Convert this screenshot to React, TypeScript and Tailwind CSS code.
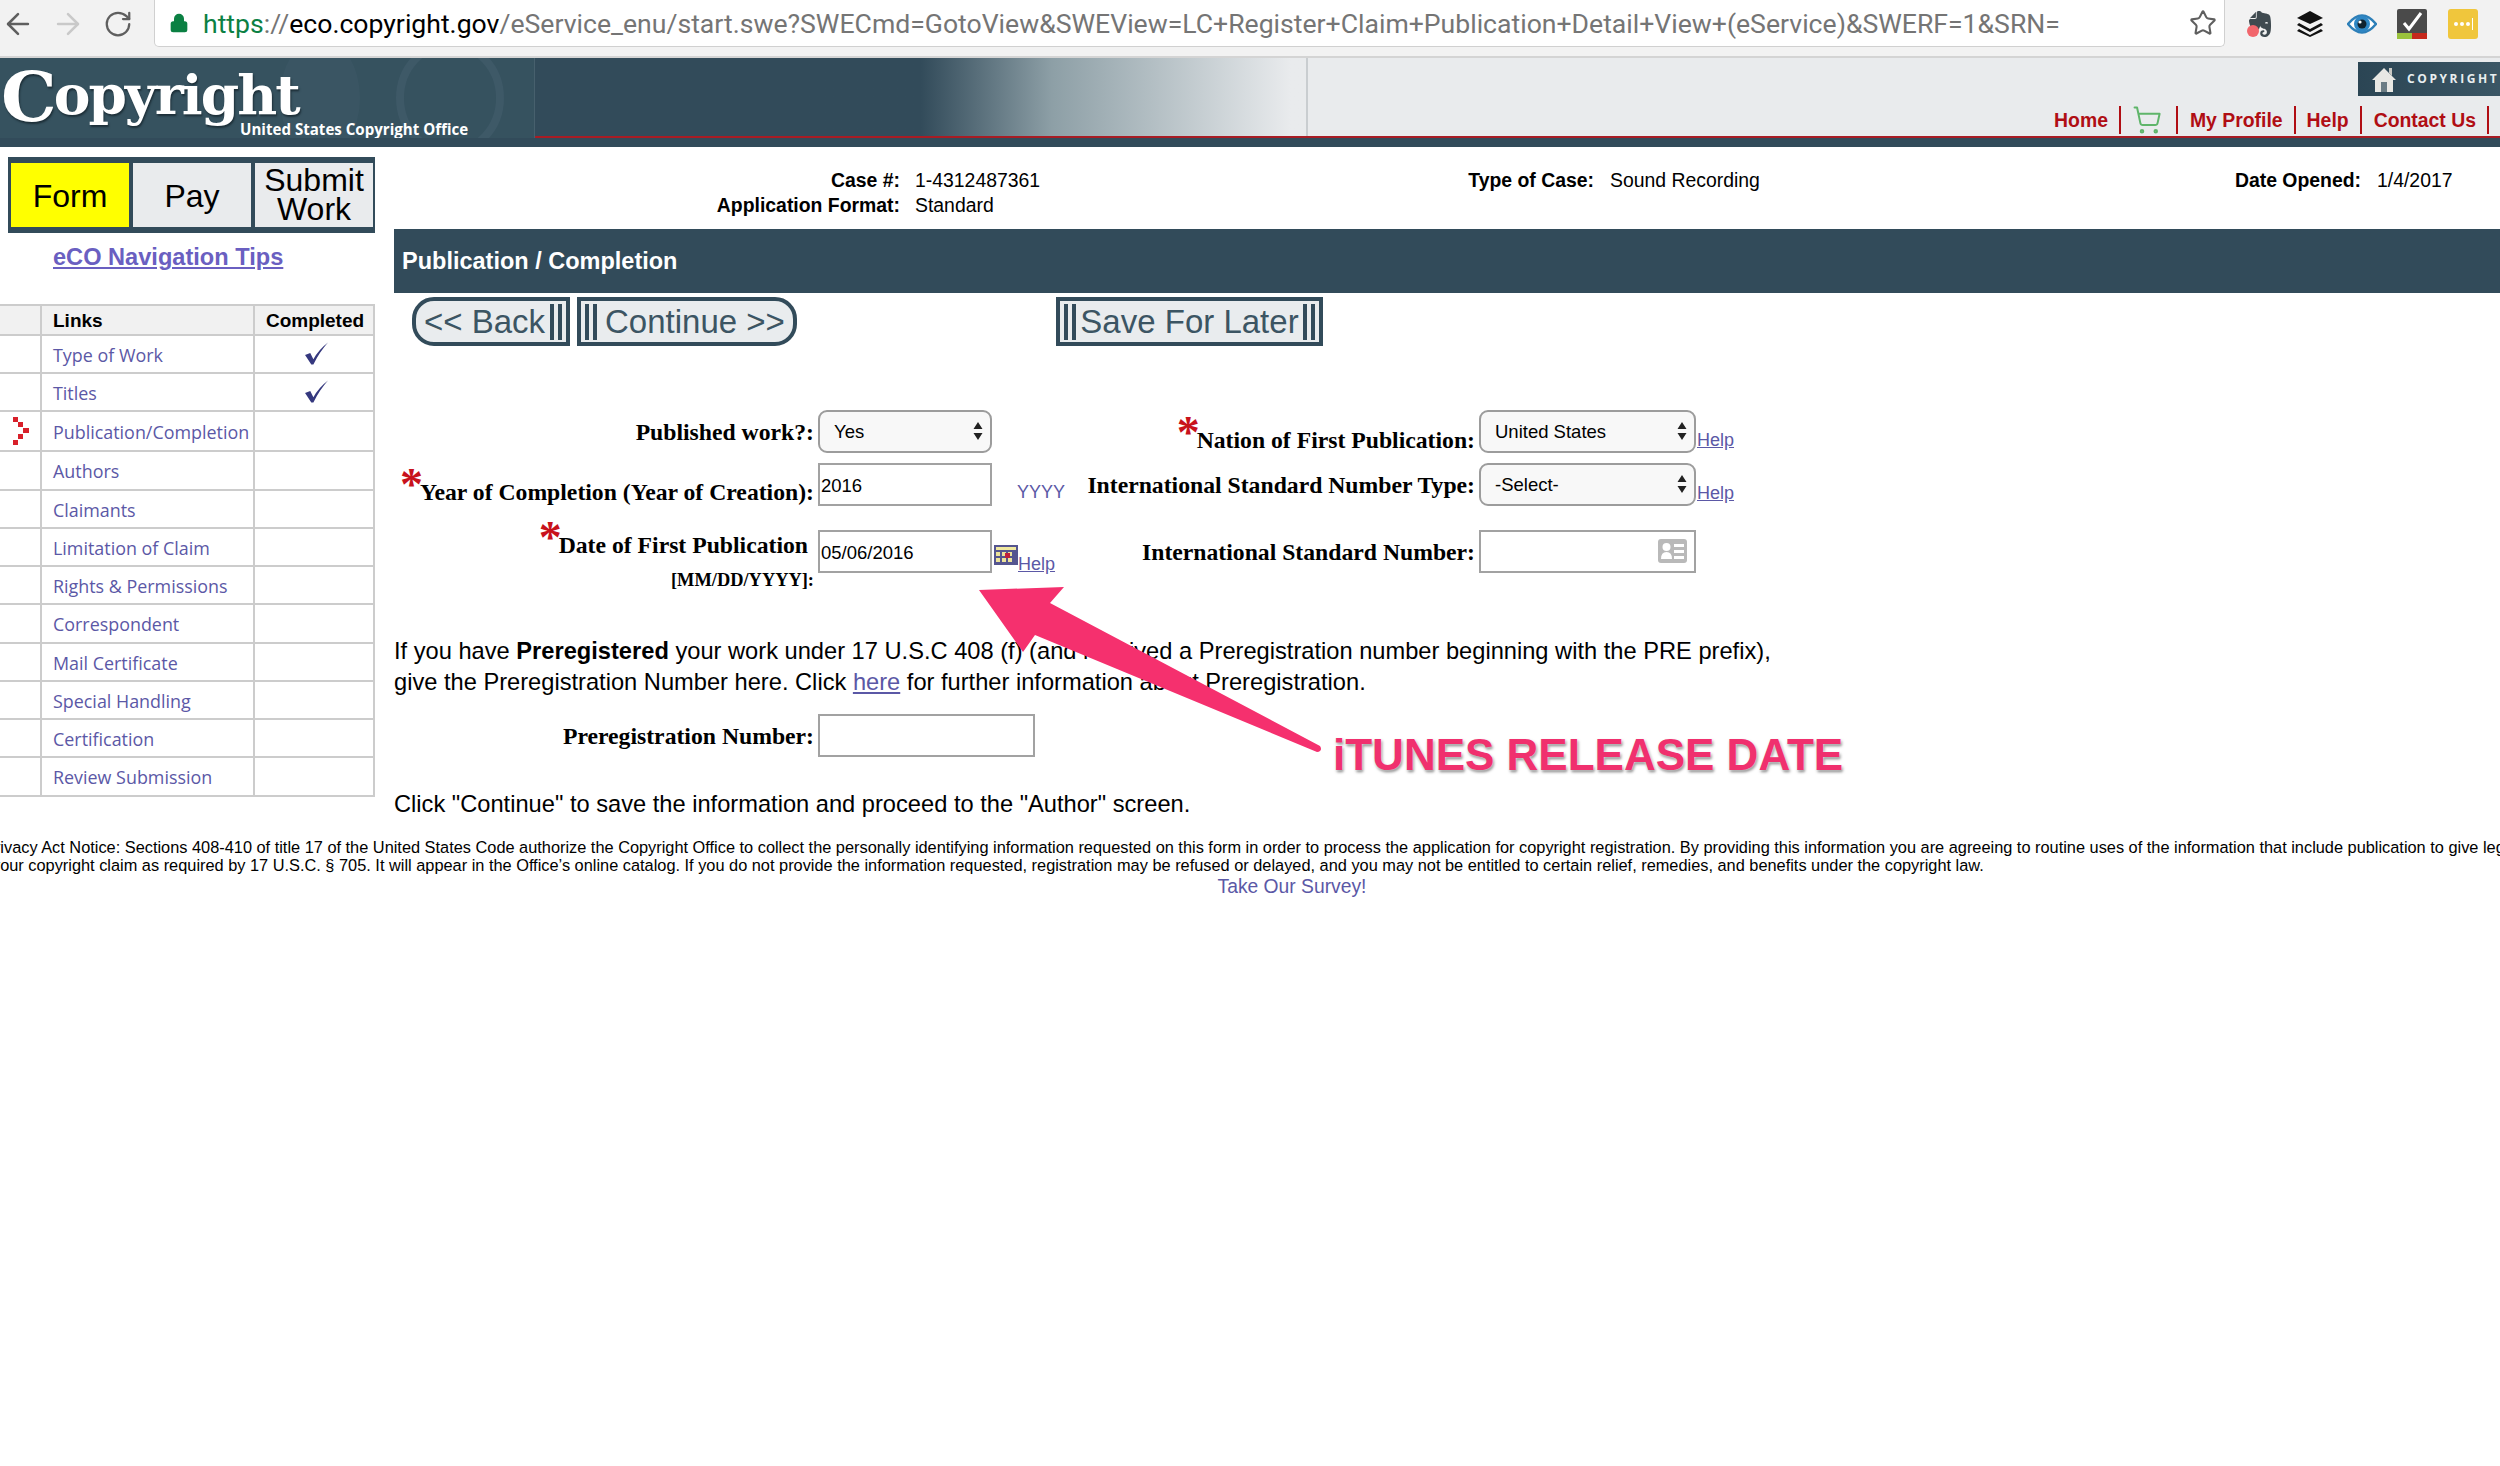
import React from "react";
import { ArrowLeft, ArrowRight, RotateCw, Star, Lock, ShoppingCart } from "lucide-react";
import { SiEvernote } from "react-icons/si";

const rows: { t: string; h: string; done?: boolean; cur?: boolean }[] = [
  { t: "Type of Work", h: "h-[38px]", done: true },
  { t: "Titles", h: "h-[38px]", done: true },
  { t: "Publication/Completion", h: "h-[40px]", cur: true },
  { t: "Authors", h: "h-[39px]" },
  { t: "Claimants", h: "h-[38px]" },
  { t: "Limitation of Claim", h: "h-[38px]" },
  { t: "Rights & Permissions", h: "h-[38px]" },
  { t: "Correspondent", h: "h-[39px]" },
  { t: "Mail Certificate", h: "h-[38px]" },
  { t: "Special Handling", h: "h-[38px]" },
  { t: "Certification", h: "h-[38px]" },
  { t: "Review Submission", h: "h-[39px]" },
];

function Bars() {
  return <span className="inline-block shrink-0 w-[12px] h-[36px] border-x-[4px] border-[#324b5a]" />;
}

function Asterisk() {
  return (
    <span className="block w-[20px] h-[28px] -mt-[16px] text-[46px] leading-[46px] text-[#c8121c] font-bold text-center">
      *
    </span>
  );
}

function Select({ value, w }: { value: string; w: string }) {
  return (
    <div className={`${w} h-[43px] shrink-0 rounded-[9px] border-2 border-[#9c9c9c] bg-[#f8f8f8] flex items-center justify-between pl-[14px] pr-[7px] font-['Liberation_Sans',sans-serif] font-normal text-[18.5px] text-black`}>
      <span>{value}</span>
      <svg width="10" height="18" viewBox="0 0 10 18" className="mb-[2px]">
        <path d="M5 0 L9.5 7 H0.5 Z M5 18 L9.5 11 H0.5 Z" fill="#222" />
      </svg>
    </div>
  );
}

function Field({ value, w, children }: { value: string; w: string; children?: React.ReactNode }) {
  return (
    <div className={`${w} h-[43px] shrink-0 border-2 border-[#a2a2a2] bg-white flex items-center justify-between pl-[1px] pr-[7px] pt-[2px] font-['Liberation_Sans',sans-serif] font-normal text-[18.5px] text-black`}>
      <span>{value}</span>
      {children}
    </div>
  );
}

function HelpLink({ cls }: { cls: string }) {
  return <a className={`underline text-[18px] leading-[22px] text-[#5b58a6] font-['Liberation_Sans',sans-serif] ${cls}`}>Help</a>;
}

const navSep = "w-[2px] h-[28px] bg-[#b00e14]";

export default function App() {
  return (
    <div className="relative w-[2500px] h-[1466px] overflow-hidden bg-white font-['Liberation_Sans',sans-serif] text-black">
      {/* browser toolbar */}
      <div className="h-[58px] bg-[#f2f2f2] border-b-2 border-[#d4d4d4] flex items-start">
        <div className="w-[154px] h-[48px] flex items-center shrink-0">
          <ArrowLeft className="ml-[1px] w-[34px] h-[34px] text-[#5f5f5f]" strokeWidth={1.8} />
          <ArrowRight className="ml-[16px] w-[34px] h-[34px] text-[#c9c9c9]" strokeWidth={1.8} />
          <RotateCw className="ml-[18px] w-[30px] h-[30px] text-[#5f5f5f]" strokeWidth={1.8} />
        </div>
        <div className="w-[2071px] h-[47px] bg-white border border-t-0 border-[#d0d0d0] rounded-b-[5px] flex items-center shrink-0">
          <Lock className="ml-[14px] w-[20px] h-[22px] text-[#0b8043] fill-[#0b8043]" strokeWidth={2} />
          <div className="ml-[14px] text-[26.6px] leading-[47px] whitespace-nowrap text-[#757575] font-['Roboto',sans-serif] flex-1">
            <span className="text-[#0b8043]">https</span>://<span className="text-black">eco.copyright.gov</span>/eService_enu/start.swe?SWECmd=GotoView&SWEView=LC+Register+Claim+Publication+Detail+View+(eService)&SWERF=1&SRN=
          </div>
          <Star className="mr-[7px] w-[28px] h-[28px] text-[#5f5f5f] shrink-0" strokeWidth={1.8} />
        </div>
        <div className="flex items-start">
          <span className="relative ml-[22px] mt-[11px] w-[26px] h-[26px]">
            <SiEvernote className="w-[26px] h-[26px] text-[#3f4a50]" />
            <span className="absolute left-0 bottom-0 w-[12px] h-[12px] rounded-full bg-[#f2666c]" />
          </span>
          <svg width="28" height="26" viewBox="0 0 28 26" className="ml-[23px] mt-[11px]">
            <path d="M14 0 L27 7 L14 13 L1 7 Z" fill="#111" />
            <path d="M3 12 L14 18 L25 12 L27 14 L14 21 L1 14 Z" fill="#111" />
            <path d="M3 18 L14 24 L25 18 L27 20 L14 26 L1 20 Z" fill="#111" />
          </svg>
          <svg width="30" height="22" viewBox="0 0 30 22" className="ml-[23px] mt-[13px]">
            <path d="M1 11 Q15 -6 29 11 Q15 28 1 11 Z" fill="#fff" stroke="#2d7fb8" strokeWidth="2.5" />
            <circle cx="15" cy="11" r="8" fill="#2d86c4" />
            <circle cx="15" cy="11" r="4.5" fill="#10222e" />
            <circle cx="13" cy="9" r="1.6" fill="#fff" />
          </svg>
          <svg width="30" height="30" viewBox="0 0 30 30" className="ml-[20px] mt-[9px]">
            <rect width="30" height="30" rx="2" fill="#4a4a4a" />
            <rect x="0" y="24" width="15" height="6" fill="#9ac23c" />
            <rect x="15" y="24" width="15" height="6" fill="#c5281c" />
            <path d="M7 14 L12 20 L24 4" fill="none" stroke="#fff" strokeWidth="3" />
          </svg>
          <div className="ml-[21px] mt-[9px] w-[30px] h-[30px] rounded-[3px] bg-[#f0c63c] flex items-center justify-center gap-[2px]">
            <span className="w-[4px] h-[4px] rounded-full bg-white" />
            <span className="w-[4px] h-[4px] rounded-full bg-white" />
            <span className="w-[4px] h-[4px] rounded-full bg-white" />
            <span className="w-[1px] h-[12px] bg-white" />
          </div>
        </div>
      </div>

      {/* site header */}
      <div className="h-[89px] flex flex-col">
        <div className="h-[80px] flex">
          <div className="relative w-[535px] shrink-0 bg-[#36525f] border-r border-[#47606d] overflow-hidden">
            <svg width="535" height="80" viewBox="0 0 535 80" className="absolute left-0 top-0">
              <ellipse cx="450" cy="40" rx="50" ry="54" fill="none" stroke="#46606f" strokeWidth="8" opacity="0.5" />
              <ellipse cx="320" cy="40" rx="40" ry="60" fill="#3c5765" opacity="0.7" />
            </svg>
            <div className="relative flex items-start h-[80px] font-['DejaVu_Serif',serif] font-bold text-white [text-shadow:1px_2px_2px_#1d2f38]">
              <span className="text-[70px] leading-[80px] -mt-[1px] ml-[1px]">C</span>
              <span className="text-[55px] leading-[70px] -ml-[3px] mt-[2px] tracking-[-2px]">opyright</span>
            </div>
            <span className="absolute left-[240px] top-[62px] whitespace-nowrap text-[15.1px] leading-[18px] font-bold text-white font-['Open_Sans',sans-serif]">United States Copyright Office</span>
          </div>
          <div className="w-[771px] shrink-0 bg-gradient-to-r from-[#324b5a] from-[50%] via-[#8d9fa6] via-[67%] to-[#e9ebed] to-[98%]" />
          <div className="flex-1 bg-[#e9ebed] border-l-2 border-[#c9cdd0] flex flex-col items-end">
            <div className="mt-[4px] w-[142px] h-[34px] bg-gradient-to-r from-[#2b4554] to-[#3b5665] flex items-center overflow-hidden">
              <svg width="26" height="28" viewBox="0 0 26 28" className="ml-[13px] shrink-0">
                <path d="M13 3 L25 15 H22 V27 H4 V15 H1 Z" fill="#e8e8e4" />
                <path d="M18 3 h3 v8 l-3 -3 Z" fill="#c9c9c4" />
                <rect x="10" y="17" width="6" height="10" fill="#6b7c84" />
              </svg>
              <span className="ml-[10px] text-[12px] font-bold tracking-[2.6px] text-[#e8eef0] font-['Open_Sans',sans-serif]">COPYRIGHT</span>
            </div>
            <div className="mt-[10px] flex items-center h-[28px] pr-[11px] text-[19.4px] font-bold text-[#b00e14] whitespace-nowrap">
              <span className="pt-[2px]">Home</span>
              <span className={`${navSep} ml-[11px]`} />
              <ShoppingCart className="ml-[11px] w-[30px] h-[30px] text-[#5fb56a]" strokeWidth={1.6} />
              <span className={`${navSep} ml-[14px]`} />
              <span className="ml-[12px] pt-[2px]">My Profile</span>
              <span className={`${navSep} ml-[11px]`} />
              <span className="ml-[11px] pt-[2px]">Help</span>
              <span className={`${navSep} ml-[11px]`} />
              <span className="ml-[12px] pt-[2px]">Contact Us</span>
              <span className={`${navSep} ml-[11px]`} />
            </div>
          </div>
        </div>
        <div className="h-[2px] bg-[#a81c24] -mt-[2px]" />
        <div className="h-[9px] bg-[#324b5a]" />
      </div>

      {/* body */}
      <div className="flex h-[691px]">
        <aside className="w-[394px] shrink-0">
          <div className="ml-[8px] mt-[10px] w-[367px] h-[76px] bg-[#324b5a] flex gap-[4px] pl-[3px] pt-[6px] text-[32px] leading-[29px] text-black">
            <div className="w-[118px] h-[64px] pt-[3px] bg-[#ffff00] flex items-center justify-center">Form</div>
            <div className="w-[118px] h-[64px] pt-[2px] bg-[#e9ebed] flex items-center justify-center">Pay</div>
            <div className="w-[118px] h-[64px] bg-[#e9ebed] flex items-center justify-center text-center">Submit<br />Work</div>
          </div>
          <a className="block ml-[53px] mt-[8px] text-[23.6px] leading-[32px] font-bold underline text-[#6a5fc1]">eCO Navigation Tips</a>
          <div className="mt-[31px] w-[375px] border-t-2 border-r-2 border-[#cccccc] font-['Open_Sans',sans-serif]">
            <div className="h-[30px] grid grid-cols-[42px_213px_1fr] bg-[#f1f1f1] border-b-2 border-[#cccccc] text-[19px] font-bold leading-[30px] font-['Liberation_Sans',sans-serif]">
              <div className="border-r-2 border-[#cccccc]" />
              <div className="border-r-2 border-[#cccccc] pl-[11px]">Links</div>
              <div className="text-center pl-[2px]">Completed</div>
            </div>
            {rows.map((r) => (
              <div key={r.t} className={`${r.h} grid grid-cols-[42px_213px_1fr] border-b-2 border-[#cccccc]`}>
                <div className="border-r-2 border-[#cccccc] flex items-center justify-center">
                  {r.cur && (
                    <svg width="18" height="28" viewBox="0 0 18 28" className="ml-[1px]">
                      <path d="M1 0h5v5H1z M6 5h5v5H6z M11 11h6v5h-6z M6 17h5v5H6z M1 23h5v5H1z" fill="#d8202a" />
                    </svg>
                  )}
                </div>
                <div className="border-r-2 border-[#cccccc] pl-[11px] pt-[2px] flex items-center text-[17.9px] text-[#5b58a6] whitespace-nowrap">{r.t}</div>
                <div className="flex items-center justify-center pl-[4px]">
                  {r.done && (
                    <svg width="25" height="24" viewBox="0 0 24 22">
                      <path d="M1 12 L6 10 L9 16 Q14 7 23 0 Q15 9 9 21 L7 21 Z" fill="#35387e" />
                    </svg>
                  )}
                </div>
              </div>
            ))}
          </div>
        </aside>

        <main className="flex-1 min-w-0">
          {/* case info */}
          <div className="h-[82px] pt-[21px] grid grid-cols-[506px_200px_494px_251px_516px] grid-rows-[25px_25px] text-[19.4px] leading-[25px] whitespace-nowrap">
            <div className="text-right font-bold">Case #:</div>
            <div className="pl-[15px]">1-4312487361</div>
            <div className="text-right font-bold">Type of Case:</div>
            <div className="pl-[16px]">Sound Recording</div>
            <div className="flex">
              <span className="w-[516px] shrink-0 text-right font-bold">Date Opened:</span>
              <span className="ml-[16px] shrink-0">1/4/2017</span>
            </div>
            <div className="text-right font-bold">Application Format:</div>
            <div className="pl-[15px]">Standard</div>
          </div>
          <div className="h-[64px] bg-[#324b5a] flex items-center pl-[8px] pt-[2px] text-[23.5px] font-bold text-white">Publication / Completion</div>

          {/* buttons */}
          <div className="mt-[4px] h-[49px] flex text-[33px] text-[#3c5563]">
            <div className="ml-[18px] w-[158px] h-[49px] rounded-l-[22px] border-[4px] border-[#324b5a] bg-[#e9ecee] flex items-center justify-end pr-[4px] gap-[5px]">
              <span className="whitespace-nowrap">&lt;&lt; Back</span>
              <Bars />
            </div>
            <div className="ml-[7px] w-[220px] h-[49px] rounded-r-[22px] border-[4px] border-[#324b5a] bg-[#e9ecee] flex items-center pl-[4px] gap-[8px]">
              <Bars />
              <span className="whitespace-nowrap">Continue &gt;&gt;</span>
            </div>
            <div className="ml-[259px] w-[267px] h-[49px] border-[4px] border-[#324b5a] bg-[#e9ecee] flex items-center justify-between px-[4px]">
              <Bars />
              <span className="whitespace-nowrap">Save For Later</span>
              <Bars />
            </div>
          </div>

          {/* form */}
          <div className="mt-[64px] font-['Liberation_Serif',serif] text-[23.7px] leading-[28px] font-bold whitespace-nowrap">
            <div className="flex h-[43px]">
              <div className="w-[420px] pt-[8px] text-right">Published work?:</div>
              <div className="w-[4px]" />
              <Select value="Yes" w="w-[174px]" />
              <div className="w-[83px]" />
              <div className="w-[400px] pt-[16px] flex justify-end items-start">
                <Asterisk />
                <span>Nation of First Publication:</span>
              </div>
              <div className="w-[4px]" />
              <Select value="United States" w="w-[217px]" />
              <HelpLink cls="ml-[1px] mt-[19px] font-normal" />
            </div>
            <div className="flex h-[43px] mt-[10px]">
              <div className="w-[420px] pt-[15px] flex justify-end items-start">
                <Asterisk />
                <span>Year of Completion (Year of Creation):</span>
              </div>
              <div className="w-[4px]" />
              <Field value="2016" w="w-[174px]" />
              <div className="w-[83px] pl-[25px] pt-[18px] font-['Liberation_Sans',sans-serif] font-normal text-[18px] leading-[22px] text-[#5b58a6]">YYYY</div>
              <div className="w-[400px] pt-[8px] text-right">International Standard Number Type:</div>
              <div className="w-[4px]" />
              <Select value="-Select-" w="w-[217px]" />
              <HelpLink cls="ml-[1px] mt-[19px] font-normal" />
            </div>
            <div className="flex h-[43px] mt-[24px]">
              <div className="w-[420px] pt-[1px] flex flex-col items-end">
                <div className="flex items-start pr-[6px]">
                  <Asterisk />
                  <span>Date of First Publication</span>
                </div>
                <span className="text-[18.4px] leading-[22px] mt-[10px]">[MM/DD/YYYY]:</span>
              </div>
              <div className="w-[4px]" />
              <Field value="05/06/2016" w="w-[174px]" />
              <div className="w-[83px] flex items-start">
                <svg width="24" height="20" viewBox="0 0 24 20" className="ml-[2px] mt-[15px] shrink-0">
                  <rect width="24" height="20" fill="#55558f" />
                  <rect x="2" y="2" width="20" height="3" fill="#f0e8a0" />
                  <path d="M2 7h4v4H2z M8 7h4v4H8z M14 7h4v4h-4z M2 13h4v4H2z M8 13h4v4H8z M14 13h4v4h-4z" fill="#ece29a" />
                  <rect x="11" y="8" width="5" height="5" fill="#c0203a" />
                </svg>
                <HelpLink cls="mt-[23px] font-normal" />
              </div>
              <div className="w-[400px] pt-[8px] text-right">International Standard Number:</div>
              <div className="w-[4px]" />
              <Field value="" w="w-[217px]">
                <svg width="29" height="24" viewBox="0 0 29 24" className="-mt-[3px]">
                  <rect width="29" height="24" rx="3" fill="#b9b9b9" />
                  <circle cx="8.5" cy="8" r="4" fill="#fff" />
                  <path d="M3 20 Q3 13 8.5 13 Q14 13 14 20 Z" fill="#fff" />
                  <path d="M16 5h10v3H16z M16 11h10v3H16z M16 17h10v3H16z" fill="#fff" />
                </svg>
              </Field>
            </div>
          </div>

          <p className="mt-[63px] text-[23.66px] leading-[31px] w-[1500px]">
            If you have <b>Preregistered</b> your work under 17 U.S.C 408 (f) (and received a Preregistration number beginning with the PRE prefix),<br />
            give the Preregistration Number here. Click <a className="underline text-[#5b58a6]">here</a> for further information about Preregistration.
          </p>

          <div className="mt-[16px] flex h-[43px] font-['Liberation_Serif',serif] text-[23.7px] leading-[28px] font-bold">
            <div className="w-[420px] pt-[8px] text-right">Preregistration Number:</div>
            <div className="w-[4px]" />
            <Field value="" w="w-[217px]" />
          </div>

          <p className="mt-[32px] text-[23.66px] leading-[31px]">Click "Continue" to save the information and proceed to the "Author" screen.</p>
        </main>
      </div>

      {/* footer notice */}
      <div className="w-[2500px] overflow-hidden text-[16.35px] leading-[18px] whitespace-nowrap">
        <div className="-ml-[16px]">Privacy Act Notice: Sections 408-410 of title 17 of the United States Code authorize the Copyright Office to collect the personally identifying information requested on this form in order to process the application for copyright registration. By providing this information you are agreeing to routine uses of the information that include publication to give legal notice of</div>
        <div className="-ml-[8px]">your copyright claim as required by 17 U.S.C. § 705. It will appear in the Office’s online catalog. If you do not provide the information requested, registration may be refused or delayed, and you may not be entitled to certain relief, remedies, and benefits under the copyright law.</div>
        <div className="text-center pl-[84px] text-[19.3px] leading-[22px] mt-[2px] text-[#5b58a6]">Take Our Survey!</div>
      </div>

      {/* annotation overlay */}
      <svg width="2500" height="1466" viewBox="0 0 2500 1466" className="absolute left-0 top-0 pointer-events-none">
        <path d="M979 590 L1064 587 L1050 603 L1320 746 Q1323 751 1317 752 L1035 635 L1023 652 Z" fill="#f5306e" />
      </svg>
      <div className="absolute left-[1333px] top-[729px] text-[44px] leading-[52px] font-bold whitespace-nowrap text-[#f0306e] [text-shadow:0_0_3px_#fff,1px_2px_3px_#777]">iTUNES RELEASE DATE</div>
    </div>
  );
}
